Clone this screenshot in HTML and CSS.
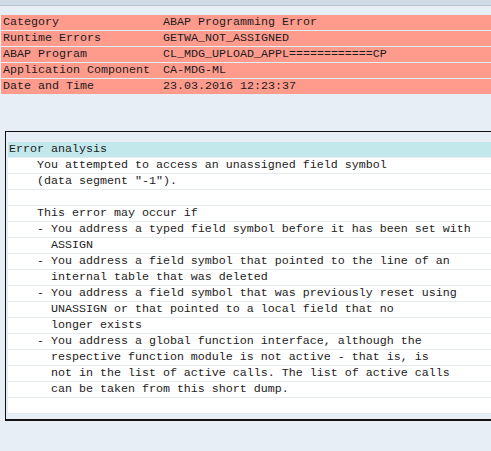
FILE: index.html
```html
<!DOCTYPE html>
<html>
<head>
<meta charset="utf-8">
<link rel="stylesheet" href="styles.css">
</head>
<body>
<div class="topbar"></div>
<div class="summary">
  <div class="srow"><span class="lbl">Category</span><span>ABAP Programming Error</span></div>
  <div class="srow"><span class="lbl">Runtime Errors</span><span>GETWA_NOT_ASSIGNED</span></div>
  <div class="srow"><span class="lbl">ABAP Program</span><span>CL_MDG_UPLOAD_APPL============CP</span></div>
  <div class="srow"><span class="lbl">Application Component</span><span>CA-MDG-ML</span></div>
  <div class="srow"><span class="lbl">Date and Time</span><span>23.03.2016 12:23:37</span></div>
</div>
<div class="box">
  <div class="line head">Error analysis</div>
  <div class="line">    You attempted to access an unassigned field symbol</div>
  <div class="line">    (data segment "-1").</div>
  <div class="line"> </div>
  <div class="line">    This error may occur if</div>
  <div class="line">    - You address a typed field symbol before it has been set with</div>
  <div class="line">      ASSIGN</div>
  <div class="line">    - You address a field symbol that pointed to the line of an</div>
  <div class="line">      internal table that was deleted</div>
  <div class="line">    - You address a field symbol that was previously reset using</div>
  <div class="line">      UNASSIGN or that pointed to a local field that no</div>
  <div class="line">      longer exists</div>
  <div class="line">    - You address a global function interface, although the</div>
  <div class="line">      respective function module is not active - that is, is</div>
  <div class="line">      not in the list of active calls. The list of active calls</div>
  <div class="line">      can be taken from this short dump.</div>
  <div class="line"> </div>
</div>
</body>
</html>
```
FILE: styles.css
```css
html, body {
  margin: 0;
  padding: 0;
}
body {
  background: #e7eef6;
  font-family: "Liberation Mono", "Courier New", monospace;
  font-size: 11.67px;
  color: #1c1c1c;
  overflow: hidden;
  width: 491px;
  height: 451px;
}
.topbar {
  height: 5px;
  background: #cfdbe6;
  border-bottom: 1px solid #b9c7d5;
}
.summary {
  margin-top: 9px;
  margin-left: 1px;
}
.srow {
  display: grid;
  grid-template-columns: 160px 1fr;
  height: 15px;
  line-height: 15px;
  padding-left: 2px;
  background: #ff9b8d;
  margin-bottom: 1px;
  white-space: pre;
}
.box {
  margin-top: 37px;
  margin-left: 5px;
  border-top: 1px solid #111;
  border-left: 1px solid #111;
  border-bottom: 2px solid #111;
  padding: 10px 0 5px 2px;
}
.line {
  height: 15px;
  line-height: 15px;
  padding-left: 1px;
  background: #ffffff;
  border-bottom: 1px solid #e4eaf1;
  white-space: pre;
}
.line.head {
  background: #c3e8ec;
}
```
